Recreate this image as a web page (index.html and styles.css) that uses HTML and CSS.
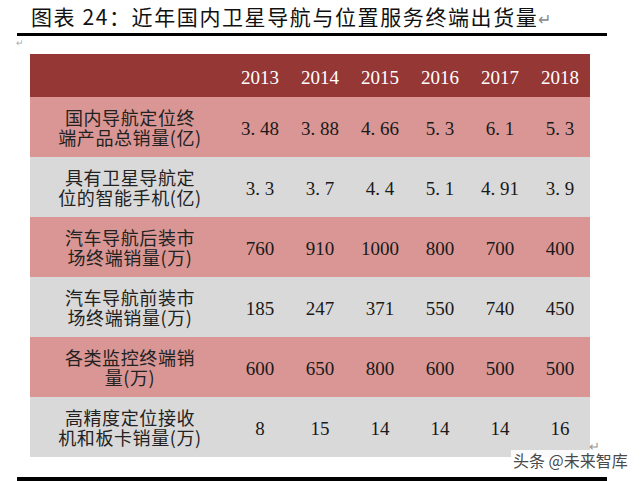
FILE: index.html
```html
<!DOCTYPE html>
<html lang="zh">
<head>
<meta charset="utf-8">
<link rel="stylesheet" href="styles.css">
</head>
<body>
<div class="page">
  <h1 class="title">图表 24：近年国内卫星导航与位置服务终端出货量<span class="ret">↵</span></h1>
  <div class="rule"></div>
  <div class="mark">↵</div>
  <table class="data">
    <colgroup>
      <col class="c-label"><col class="c-n"><col class="c-n"><col class="c-n"><col class="c-n"><col class="c-n"><col class="c-n">
    </colgroup>
    <thead>
      <tr class="head">
        <th></th><th>2013</th><th>2014</th><th>2015</th><th>2016</th><th>2017</th><th>2018</th>
      </tr>
    </thead>
    <tbody>
      <tr class="pink">
        <td class="label"><span class="ln">国内导航定位终</span><span class="ln">端产品总销量(亿)</span></td>
        <td>3<span class="dot">.</span>48</td><td>3<span class="dot">.</span>88</td><td>4<span class="dot">.</span>66</td><td>5<span class="dot">.</span>3</td><td>6<span class="dot">.</span>1</td><td>5<span class="dot">.</span>3</td>
      </tr>
      <tr class="gray">
        <td class="label"><span class="ln">具有卫星导航定</span><span class="ln">位的智能手机(亿)</span></td>
        <td>3<span class="dot">.</span>3</td><td>3<span class="dot">.</span>7</td><td>4<span class="dot">.</span>4</td><td>5<span class="dot">.</span>1</td><td>4<span class="dot">.</span>91</td><td>3<span class="dot">.</span>9</td>
      </tr>
      <tr class="pink">
        <td class="label"><span class="ln">汽车导航后装市</span><span class="ln">场终端销量(万)</span></td>
        <td>760</td><td>910</td><td>1000</td><td>800</td><td>700</td><td>400</td>
      </tr>
      <tr class="gray">
        <td class="label"><span class="ln">汽车导航前装市</span><span class="ln">场终端销量(万)</span></td>
        <td>185</td><td>247</td><td>371</td><td>550</td><td>740</td><td>450</td>
      </tr>
      <tr class="pink">
        <td class="label"><span class="ln">各类监控终端销</span><span class="ln">量(万)</span></td>
        <td>600</td><td>650</td><td>800</td><td>600</td><td>500</td><td>500</td>
      </tr>
      <tr class="gray">
        <td class="label"><span class="ln">高精度定位接收</span><span class="ln">机和板卡销量(万)</span></td>
        <td>8</td><td>15</td><td>14</td><td>14</td><td>14</td><td>16</td>
      </tr>
    </tbody>
  </table>
  <div class="foot">
    <span class="ret2">↵</span>
  </div>
  <div class="rule bottom"></div>
  <div class="watermark">头条 @未来智库</div>
</div>
</body>
</html>
```

FILE: styles.css
```css
html, body {
  margin: 0;
  padding: 0;
  background: #ffffff;
}

.page {
  position: relative;
  width: 644px;
  height: 481px;
  overflow: hidden;
  font-family: "Noto Sans CJK SC", "Liberation Serif", serif;
}

.title {
  margin: 0;
  padding: 4px 0 0 31px;
  height: 29px;
  box-sizing: border-box;
  font-size: 21px;
  line-height: 25px;
  font-weight: 400;
  letter-spacing: 1.6px;
  color: #111;
  white-space: nowrap;
}

.title .ret {
  font-size: 16px;
  color: #888;
  letter-spacing: 0;
  margin-left: 0;
}

.rule {
  margin: 4px 0 0 17px;
  width: 590px;
  height: 3px;
  background: #000;
}

.mark {
  margin-left: 16px;
  height: 18px;
  font-size: 9px;
  line-height: 14px;
  color: #aaa;
}

.data {
  margin-left: 30px;
  width: 560px;
  border-collapse: collapse;
  table-layout: fixed;
}

.c-label { width: 200px; }
.c-n { width: 60px; }

.data th,
.data td {
  padding: 0;
  text-align: center;
  vertical-align: middle;
}

.head {
  height: 43px;
  background: #953735;
}

.head th {
  font-family: "Liberation Serif", serif;
  font-weight: 400;
  font-size: 19px;
  color: #ffffff;
  padding-top: 5px;
}

.pink { background: #d99694; height: 60px; }
.gray { background: #d9d9d9; height: 60px; }

.data td {
  font-family: "Liberation Serif", serif;
  font-size: 19px;
  color: #1a1a1a;
  padding-top: 3px;
}

.data td.label {
  font-family: "Noto Sans CJK SC", sans-serif;
  font-size: 18px;
  letter-spacing: 0.6px;
  color: #222;
  padding-top: 0;
}

.ln {
  display: block;
  height: 20px;
  line-height: 20px;
  overflow: visible;
}

.dot {
  display: inline-block;
  width: 9.5px;
  text-align: left;
}

.foot {
  height: 20px;
  position: relative;
}

.ret2 {
  position: absolute;
  left: 589px;
  top: -16px;
  font-size: 13px;
  line-height: 10px;
  color: #999;
}

.rule.bottom {
  margin-top: 0;
  height: 4px;
}

.watermark {
  position: absolute;
  left: 511px;
  top: 450px;
  font-family: "Noto Sans CJK SC", sans-serif;
  font-size: 16px;
  line-height: 20px;
  color: #4a4a4a;
  background: rgba(255, 255, 255, 0.85);
  padding: 0 2px;
}
```
